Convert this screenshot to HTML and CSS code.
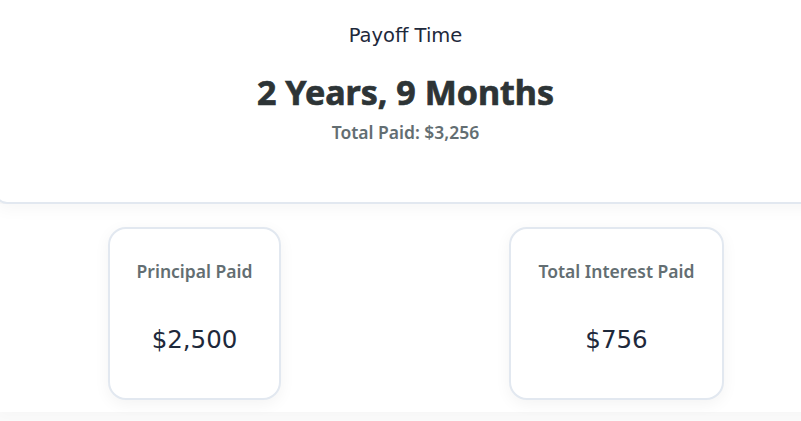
FILE: index.html
```html
<!DOCTYPE html>
<html>
<head>
<meta charset="utf-8">
<link rel="stylesheet" href="styles.css">
</head>
<body>
<div class="page">
  <section class="hero">
    <div class="hero-label">Payoff Time</div>
    <div class="hero-value">2 Years, 9 Months</div>
    <div class="hero-sub">Total Paid: $3,256</div>
  </section>
  <section class="stats">
    <div class="stat">
      <div class="stat-label">Principal Paid</div>
      <div class="stat-value">$2,500</div>
    </div>
    <div class="stat">
      <div class="stat-label">Total Interest Paid</div>
      <div class="stat-value">$756</div>
    </div>
  </section>
</div>
</body>
</html>
```

FILE: styles.css
```css
html, body {
  margin: 0;
  padding: 0;
  background: #ffffff;
  overflow: hidden;
}
.page {
  width: 801px;
  height: 421px;
  background: #fafafa;
  overflow: hidden;
}
.hero {
  position: relative;
  z-index: 1;
  margin-left: -5px;
  width: 835px;
  height: 204px;
  box-sizing: border-box;
  background: #ffffff;
  border-left: 2px solid #e2e8f0;
  border-bottom: 2px solid #e2e8f0;
  border-bottom-left-radius: 12px;
  box-shadow: 0 6px 16px rgba(0,0,0,0.035);
  display: flex;
  flex-direction: column;
  align-items: center;
  padding-top: 22px;
  padding-right: 16px;
}
.hero-label {
  font-family: "DejaVu Sans", sans-serif;
  font-size: 19.5px;
  line-height: 28px;
  color: #1e293b;
}
.hero-value {
  font-family: "Noto Sans", sans-serif;
  font-weight: 700;
  font-size: 34px;
  line-height: 42px;
  color: #2d3436;
  -webkit-text-stroke: 0.7px #2d3436;
  margin-top: 21px;
}
.hero-sub {
  font-family: "Noto Sans", sans-serif;
  font-weight: 600;
  font-size: 17.5px;
  line-height: 24px;
  color: #636e72;
  margin-top: 7px;
}
.stats {
  display: grid;
  grid-template-columns: 389px 389px;
  column-gap: 33px;
  justify-items: center;
  padding-top: 23px;
  background: #ffffff;
  height: 185px;
  width: 830px;
  box-shadow: 0 4px 10px rgba(0,0,0,0.015);
}
.stat {
  box-sizing: border-box;
  height: 173px;
  background: #ffffff;
  border: 2px solid #e2e8f0;
  border-radius: 18px;
  box-shadow: 0 4px 16px rgba(0,0,0,0.05);
  padding: 30px 27px 0;
  display: flex;
  flex-direction: column;
  align-items: center;
}
.stat-label {
  font-family: "Noto Sans", sans-serif;
  font-weight: 600;
  font-size: 17.5px;
  line-height: 24px;
  color: #636e72;
}
.stat-value {
  font-family: "DejaVu Sans", sans-serif;
  font-size: 24.5px;
  line-height: 30px;
  color: #1e293b;
  margin-top: 42px;
}
```
